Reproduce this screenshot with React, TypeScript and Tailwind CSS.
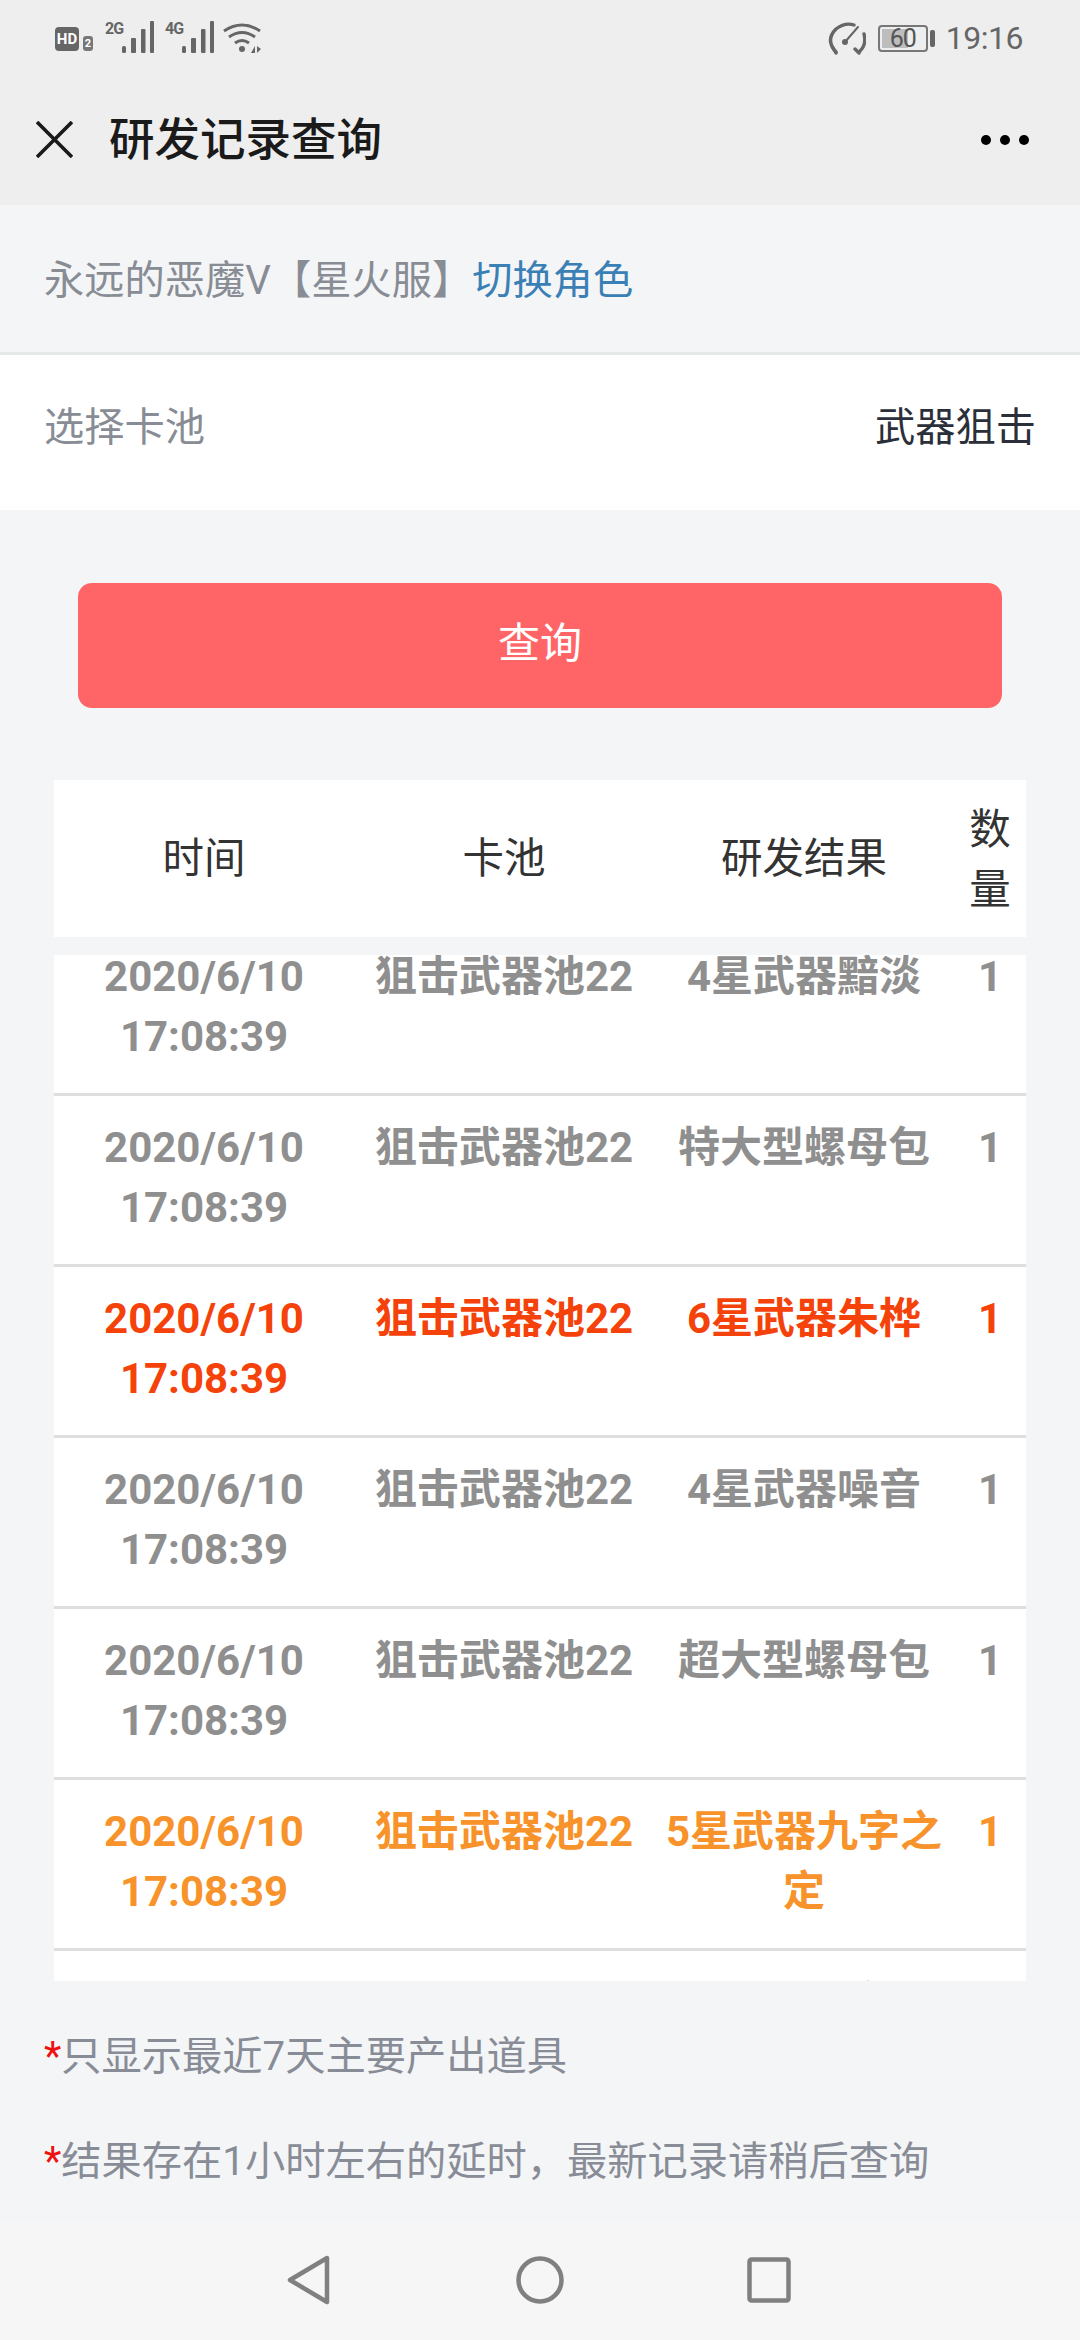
const FONT = "font-['Roboto','Noto_Sans_CJK_SC',sans-serif]";

type Row = { time: string; pool: string; result: string; color: string };

const GRAY = "text-[#8f8f8f]";
const RED = "text-[#f4420a]";
const ORANGE = "text-[#f7932a]";

const rows: Row[] = [
  { time: "2020/6/10 17:08:39", pool: "狙击武器池22", result: "4星武器黯淡", color: GRAY },
  { time: "2020/6/10 17:08:39", pool: "狙击武器池22", result: "特大型螺母包", color: GRAY },
  { time: "2020/6/10 17:08:39", pool: "狙击武器池22", result: "6星武器朱桦", color: RED },
  { time: "2020/6/10 17:08:39", pool: "狙击武器池22", result: "4星武器噪音", color: GRAY },
  { time: "2020/6/10 17:08:39", pool: "狙击武器池22", result: "超大型螺母包", color: GRAY },
  { time: "2020/6/10 17:08:39", pool: "狙击武器池22", result: "5星武器九字之定", color: ORANGE },
  { time: "2020/6/10 17:08:39", pool: "狙击武器池22", result: "4星武器黯淡", color: GRAY },
];

function Bars() {
  return (
    <svg width="32" height="32" viewBox="0 0 32 32" fill="#666">
      <rect x="0" y="25" width="4" height="7" rx="1.5" />
      <rect x="9" y="17" width="5" height="15" rx="1" />
      <rect x="19" y="8" width="4.5" height="24" rx="1" />
      <rect x="28" y="0" width="4" height="32" rx="1" />
    </svg>
  );
}

function Signal({ label }: { label: string }) {
  return (
    <div className="w-[49px] h-[32px] relative">
      <span className="text-[16px] font-bold leading-none text-[#666] block w-[17px] tracking-[-1px] -mt-[1px]">{label}</span>
      <div className="absolute left-[17px] top-0"><Bars /></div>
    </div>
  );
}

function StatusBar() {
  return (
    <div className="h-[76px] flex items-center justify-between pl-[55px] pr-[57px] text-[#666]">
      <div className="flex items-start">
        <div className="mt-[5px] w-[24px] h-[24px] bg-[#666] rounded-[4px] text-white text-[15px] font-bold flex items-center justify-center leading-none">HD</div>
        <div className="ml-[4px] mt-[14px] w-[10px] h-[15px] bg-[#777] rounded-[3px] text-white text-[11px] font-bold flex items-center justify-center leading-none">2</div>
        <div className="ml-[12px]"><Signal label="2G" /></div>
        <div className="ml-[11px]"><Signal label="4G" /></div>
        <svg className="ml-[9px]" width="38" height="32" viewBox="0 0 38 32" fill="none" stroke="#666" strokeWidth="3">
          <path d="M1 9 Q19 -3 37 9" />
          <path d="M6 15 Q19 6 32 15" />
          <path d="M12 21 Q19 16 26 21" />
          <circle cx="19" cy="27" r="3" fill="#666" stroke="none" />
          <path d="M28 31 L32 24 L32 31 Z M34 24 L38 27 L34 31 Z" fill="#666" stroke="none" />
        </svg>
      </div>
      <div className="flex items-center">
        <svg width="38" height="34" viewBox="0 0 38 34" fill="none" stroke="#666" strokeWidth="3.4" strokeLinecap="round">
          <path d="M8 31 Q-3 19 8 8 Q17 1 26 4" />
          <path d="M36 13 Q39 24 31 31" />
          <path d="M5 27 L8 32 M27 28 L31 32" />
          <path d="M17 21 L30 6" strokeWidth="2" />
          <circle cx="17" cy="21" r="3" fill="#666" stroke="none" />
        </svg>
        <div className="ml-[12px] w-[50px] h-[27px] border-2 border-[#777] rounded-[4px] relative flex items-center justify-center overflow-hidden">
          <div className="absolute left-[2px] top-[2px] bottom-[2px] w-[26px] bg-[#bdbdbd]" />
          <span className="relative text-[25px] leading-none text-[#555] tracking-[-1px]">60</span>
        </div>
        <div className="ml-[2px] w-[5px] h-[17px] bg-[#666] rounded-[2px]" />
        <span className="ml-[11px] text-[32px] leading-none text-[#666] tracking-[-0.5px]">19:16</span>
      </div>
    </div>
  );
}

function Header() {
  return (
    <div className="bg-[#eeeeee] h-[205px]">
      <StatusBar />
      <div className="h-[129px] pb-[2px] flex items-center justify-between pl-[36px] pr-[51px]">
        <div className="flex items-center">
          <svg width="37" height="37" viewBox="0 0 37 37" stroke="#1a1a1a" strokeWidth="3.6">
            <path d="M1 1 L36 36 M36 1 L1 36" />
          </svg>
          <span className="ml-[36px] mt-[3px] text-[45.5px] leading-none text-[#1a1a1a] font-medium">研发记录查询</span>
        </div>
        <div className="flex gap-[9px]">
          <div className="w-[10px] h-[10px] rounded-full bg-black" />
          <div className="w-[10px] h-[10px] rounded-full bg-black" />
          <div className="w-[10px] h-[10px] rounded-full bg-black" />
        </div>
      </div>
    </div>
  );
}

function TableRow({ row }: { row: Row }) {
  const [date, time] = row.time.split(" ");
  return (
    <div className={`flex border-b-[3px] border-[#dedede] h-[171px] pt-[22px] text-[42px] leading-[60px] font-bold text-center ${row.color}`}>
      <div className="w-[300px]">{date}<br />{time}</div>
      <div className="w-[300px]">{row.pool}</div>
      <div className="w-[300px] px-[10px]">{row.result}</div>
      <div className="w-[72px]">1</div>
    </div>
  );
}

export default function App() {
  return (
    <div className={`w-[1080px] h-[2340px] bg-[#f4f5f7] flex flex-col overflow-hidden ${FONT}`}>
      <Header />
      <div className="h-[150px] flex items-center pl-[44px] pt-[5px] text-[40.25px] text-[#888c94] border-b-[3px] border-[#e6e9ea]">
        永远的恶魔V【星火服】<span className="text-[#3a80b5]">切换角色</span>
      </div>
      <div className="h-[155px] bg-white flex items-center justify-between pl-[44px] pr-[44px] pb-[8px] text-[40.25px]">
        <span className="text-[#888c94]">选择卡池</span>
        <span className="text-[#2b2f3a]">武器狙击</span>
      </div>
      <div className="mt-[73px] mx-[78px] h-[125px] pb-[4px] rounded-[14px] bg-[#ff6567] text-white text-[42px] flex items-center justify-center">查询</div>
      <div className="mt-[72px] mx-[54px] h-[157px] pt-[2px] bg-white flex items-center text-center text-[41.5px] text-[#333]">
        <div className="w-[300px]">时间</div>
        <div className="w-[300px]">卡池</div>
        <div className="w-[300px]">研发结果</div>
        <div className="w-[72px] leading-[60px] px-[14px]">数量</div>
      </div>
      <div className="mt-[18px] mx-[54px] h-[1026px] bg-white overflow-hidden">
        <div className="-mt-[30px]">
          {rows.map((row, i) => (
            <TableRow key={i} row={row} />
          ))}
        </div>
      </div>
      <div className="flex-1 pl-[44px] pt-[51px] text-[40.25px] leading-[50px] text-[#888c96]">
        <div><span className="text-[#ee1111]">*</span>只显示最近7天主要产出道具</div>
        <div className="mt-[55px]"><span className="text-[#ee1111]">*</span>结果存在1小时左右的延时，最新记录请稍后查询</div>
      </div>
      <div className="h-[120px] bg-[#f6f6f6] flex items-center">
        <svg className="ml-[287px]" width="43" height="50" viewBox="0 0 43 50" fill="none" stroke="#808080" strokeWidth="4.5" strokeLinejoin="round">
          <path d="M40 3 L3 25 L40 47 Z" />
        </svg>
        <svg className="ml-[186px]" width="48" height="48" viewBox="0 0 48 48" fill="none" stroke="#808080" strokeWidth="4.5">
          <circle cx="24" cy="24" r="21.5" />
        </svg>
        <svg className="ml-[183px]" width="44" height="46" viewBox="0 0 44 46" fill="none" stroke="#808080" strokeWidth="4.5" strokeLinejoin="round">
          <rect x="2.5" y="2.5" width="39" height="41" rx="2" />
        </svg>
      </div>
    </div>
  );
}
